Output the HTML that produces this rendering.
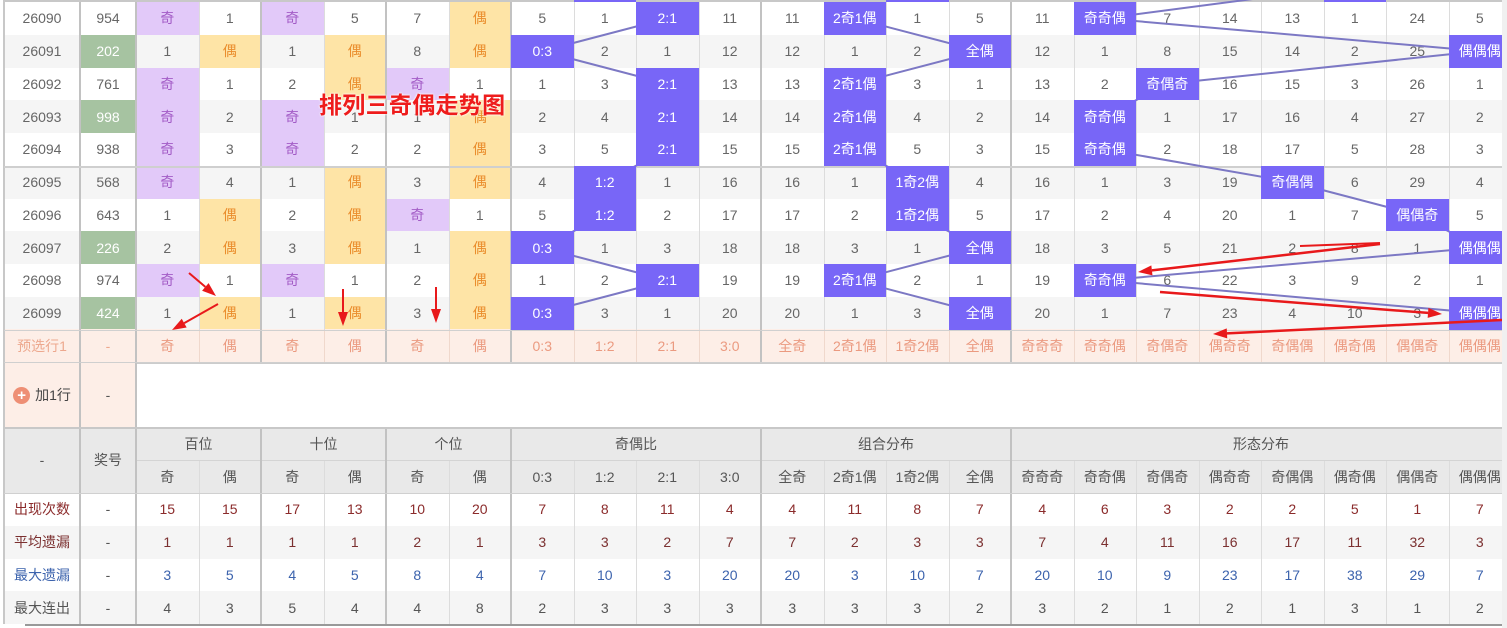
<!DOCTYPE html>
<html><head><meta charset="utf-8">
<style>
html,body{margin:0;padding:0;background:#fff;width:1507px;height:628px;overflow:hidden;font-family:"Liberation Sans","Noto Sans CJK SC",sans-serif;}
#wrap{position:absolute;left:0;top:0;width:1502px;height:628px;overflow:hidden;}
.c{position:absolute;display:flex;align-items:center;justify-content:center;font-size:14px;color:#666;box-sizing:border-box;white-space:nowrap;overflow:hidden;}
.l{position:absolute;}
#sb{position:absolute;left:1502px;top:0;width:5px;height:628px;background:#f0f0f0;}
</style></head><body>
<div id="wrap"></div><div id="sb"></div>
<script>
var W=document.getElementById('wrap');
var H='';
function X(i){return i<0?(i==-2?4:80):136+62.5*i;}
var rh=32.75;
function RY(r){return 2+rh*r;}
function cell(x,y,w,h,txt,bg,col,extra){H+='<div class="c" style="left:'+x+'px;top:'+y+'px;width:'+w+'px;height:'+h+'px;'+(bg?'background:'+bg+';':'')+(col?'color:'+col+';':'')+(extra||'')+'">'+txt+'</div>';}
function line(x,y,w,h,c){H+='<div class="l" style="left:'+x+'px;top:'+y+'px;width:'+w+'px;height:'+h+'px;background:'+c+'"></div>';}
var P='#e2c9f9',PT='#a35cc6',Y='#fee4a6',YT='#ea8d2c',G='#a6c3a1',B='#7866f7';
var rows=[
['26090','954','',['P','1','P','5','7','Y'],[2,'2:1',['5','1','','11']],[1,'2奇1偶',['11','','1','5']],[1,'奇奇偶',['11','','7','14','13','1','24','5']]],
['26091','202','G',['1','Y','1','Y','8','Y'],[0,'0:3',['','2','1','12']],[3,'全偶',['12','1','2','']],[7,'偶偶偶',['12','1','8','15','14','2','25','']]],
['26092','761','',['P','1','2','Y','P','1'],[2,'2:1',['1','3','','13']],[1,'2奇1偶',['13','','3','1']],[2,'奇偶奇',['13','2','','16','15','3','26','1']]],
['26093','998','G',['P','2','P','1','1','Y'],[2,'2:1',['2','4','','14']],[1,'2奇1偶',['14','','4','2']],[1,'奇奇偶',['14','','1','17','16','4','27','2']]],
['26094','938','',['P','3','P','2','2','Y'],[2,'2:1',['3','5','','15']],[1,'2奇1偶',['15','','5','3']],[1,'奇奇偶',['15','','2','18','17','5','28','3']]],
['26095','568','',['P','4','1','Y','3','Y'],[1,'1:2',['4','','1','16']],[2,'1奇2偶',['16','1','','4']],[4,'奇偶偶',['16','1','3','19','','6','29','4']]],
['26096','643','',['1','Y','2','Y','P','1'],[1,'1:2',['5','','2','17']],[2,'1奇2偶',['17','2','','5']],[6,'偶偶奇',['17','2','4','20','1','7','','5']]],
['26097','226','G',['2','Y','3','Y','1','Y'],[0,'0:3',['','1','3','18']],[3,'全偶',['18','3','1','']],[7,'偶偶偶',['18','3','5','21','2','8','1','']]],
['26098','974','',['P','1','P','1','2','Y'],[2,'2:1',['1','2','','19']],[1,'2奇1偶',['19','','2','1']],[1,'奇奇偶',['19','','6','22','3','9','2','1']]],
['26099','424','G',['1','Y','1','Y','3','Y'],[0,'0:3',['','3','1','20']],[3,'全偶',['20','1','3','']],[7,'偶偶偶',['20','1','7','23','4','10','3','']]]
];
for(var r=0;r<10;r++){ if(r%2==1) line(4,RY(r),1500,rh,'#f5f5f5'); }
line(4,0,1500,2,'#fff');
line(X(0),0,62.5,2,P);line(X(3),0,62.5,2,Y);
var blues=[];
for(var r=0;r<10;r++){var d=rows[r],y=RY(r);
 cell(X(-2),y,76,rh,d[0]);
 cell(X(-1),y,56,rh,d[1],d[2]?G:'',d[2]?'#fff':'');
 for(var k=0;k<6;k++){var v=d[3][k];
  if(v=='P')cell(X(k),y,62.5,rh,'奇',P,PT);else if(v=='Y')cell(X(k),y,62.5,rh,'偶',Y,YT);else cell(X(k),y,62.5,rh,v);}
 var gs=[[6,d[4]],[10,d[5]],[14,d[6]]];
 for(var g=0;g<3;g++){var base=gs[g][0],gd=gs[g][1];
  for(var k=0;k<gd[2].length;k++){ if(k!=gd[0]) cell(X(base+k),y,62.5,rh,gd[2][k]); }
  blues.push([g,r,base+gd[0],gd[1]]);}
}
var py=RY(10)-0.5;
line(4,py,1500,33,'#fdeee7');
cell(4,py,76,33,'预选行1','', '#eda88e');cell(80,py,56,33,'-','','#eda88e');
var pre=['奇','偶','奇','偶','奇','偶','0:3','1:2','2:1','3:0','全奇','2奇1偶','1奇2偶','全偶','奇奇奇','奇奇偶','奇偶奇','偶奇奇','奇偶偶','偶奇偶','偶偶奇','偶偶偶'];
for(var k=0;k<22;k++)cell(X(k),py,62.5,33,pre[k],'','#eb9a80');
line(4,363,132,64,'#fdeee7');
cell(4,363,76,64,'<span style="display:inline-block;width:17px;height:17px;border-radius:50%;background:#ee8f75;color:#fff;font-size:15px;line-height:17px;text-align:center;margin-right:5px;font-weight:bold">+</span><span style="color:#444">加1行</span>');
cell(80,363,56,64,'-','','#555');
line(4,427,1500,66,'#e9e9e9');
cell(4,427,76,66,'-','','#555');cell(80,427,56,66,'奖号','','#555');
var grp=[['百位',0,2],['十位',2,2],['个位',4,2],['奇偶比',6,4],['组合分布',10,4],['形态分布',14,8]];
for(var g=0;g<grp.length;g++)cell(X(grp[g][1]),427,62.5*grp[g][2],33,grp[g][0],'','#555');
for(var k=0;k<22;k++)cell(X(k),460,62.5,33,pre[k],'','#555');
var st=[['出现次数','#8b2b2b','15,15,17,13,10,20,7,8,11,4,4,11,8,7,4,6,3,2,2,5,1,7'],
['平均遗漏','#7b3030','1,1,1,1,2,1,3,3,2,7,7,2,3,3,7,4,11,16,17,11,32,3'],
['最大遗漏','#3c63ad','3,5,4,5,8,4,7,10,3,20,20,3,10,7,20,10,9,23,17,38,29,7'],
['最大连出','#555','4,3,5,4,4,8,2,3,3,3,3,3,3,2,3,2,1,2,1,3,1,2']];
for(var j=0;j<4;j++){var y=493+32.75*j;if(j%2)line(4,y,1500,32.75,'#f5f5f5');
 cell(4,y,76,32.75,st[j][0],'',st[j][1]);cell(80,y,56,32.75,'-','','#555');
 var v=st[j][2].split(',');for(var k=0;k<22;k++)cell(X(k),y,62.5,32.75,v[k],'',st[j][1]);}
var thick=[80,136,261,386,511,761,1011];
for(var k=0;k<22;k++){var x=X(k);if(k>0&&thick.indexOf(Math.round(x))<0){line(x,0,1,330,'#dcdcdc');line(x,330,1,33,'#f0d8cc');line(x,460,1,164,'#dcdcdc');}}
line(136,460,1366,1,'#d4d4d4');
for(var i=0;i<thick.length;i++){line(thick[i]-1,0,2,624,'#c2c2c2');}
line(3,0,2,624,'#c8c8c8');
line(136,363,1366,64,'#fff');line(136,363,1366,1,'#ccc');
for(var i=0;i<2;i++){line(thick[i]-1,363,2,64,'#c2c2c2');}
line(4,166,1500,2,'#cfcfcf');line(4,330,1500,1,'#d0d0d0');line(4,362,1500,1,'#cfcfcf');line(4,427,1500,2,'#c8c8c8');line(4,493,1500,1,'#d0d0d0');
line(4,0,1500,2,'#c8c8c8');
// partial blue cells from previous row
line(X(7),0,62.5,2,B);line(X(12),0,62.5,2,B);line(X(19),0,62.5,2,B);
line(25,624,1480,2,'#999');
var s='<svg style="position:absolute;left:0;top:0" width="1502" height="628">';
var last={};
function cx(c){return X(c)+31.25;}function cy(r){return RY(r)+rh/2;}
s+='<line x1="'+cx(15)+'" y1="'+cy(0)+'" x2="'+cx(19)+'" y2="'+cy(-1)+'" stroke="#7c78c4" stroke-width="2"/>';
for(var i=0;i<blues.length;i++){var b=blues[i];if(last[b[0]]){var a=last[b[0]];
 s+='<line x1="'+cx(a[2])+'" y1="'+cy(a[1])+'" x2="'+cx(b[2])+'" y2="'+cy(b[1])+'" stroke="#7c78c4" stroke-width="2"/>';}
 last[b[0]]=b;}
s+='</svg>';H+=s;
for(var i=0;i<blues.length;i++){var b=blues[i];cell(X(b[2]),RY(b[1]),62.5,rh,b[3],B,'#fff','font-size:14px;');}
H+='<div style="position:absolute;left:319px;top:88px;font-size:23px;font-weight:bold;color:#ee1c1c;font-family:\'Noto Sans CJK SC\',sans-serif;text-shadow:0 0 2px #fff,0 0 2px #fff;line-height:30px;letter-spacing:0.3px">排列三奇偶走势图</div>';
var ar=[[189,273,216,296],[218,304,172,330],[343,289,343,326],[436,287,436,323],[1380,244,1138,272],[1160,292,1442,314],[1502,320,1213,334],[1300,246,1380,243]];
var a='<svg style="position:absolute;left:0;top:0" width="1502" height="628">';
for(var i=0;i<ar.length;i++){var p=ar[i],dx=p[2]-p[0],dy=p[3]-p[1],L=Math.sqrt(dx*dx+dy*dy),ux=dx/L,uy=dy/L;
 var hl=i==7?0:14,hw=5;
 var bx=p[2]-ux*hl,by=p[3]-uy*hl;
 a+='<line x1="'+p[0]+'" y1="'+p[1]+'" x2="'+bx+'" y2="'+by+'" stroke="#e8191b" stroke-width="'+(i>=4&&i<7?2.5:2)+'"/>';
 if(hl)a+='<polygon fill="#e8191b" points="'+p[2]+','+p[3]+' '+(bx-uy*hw)+','+(by+ux*hw)+' '+(bx+uy*hw)+','+(by-ux*hw)+'"/>';}
a+='</svg>';H+=a;
W.innerHTML=H;
</script>
</body></html>
